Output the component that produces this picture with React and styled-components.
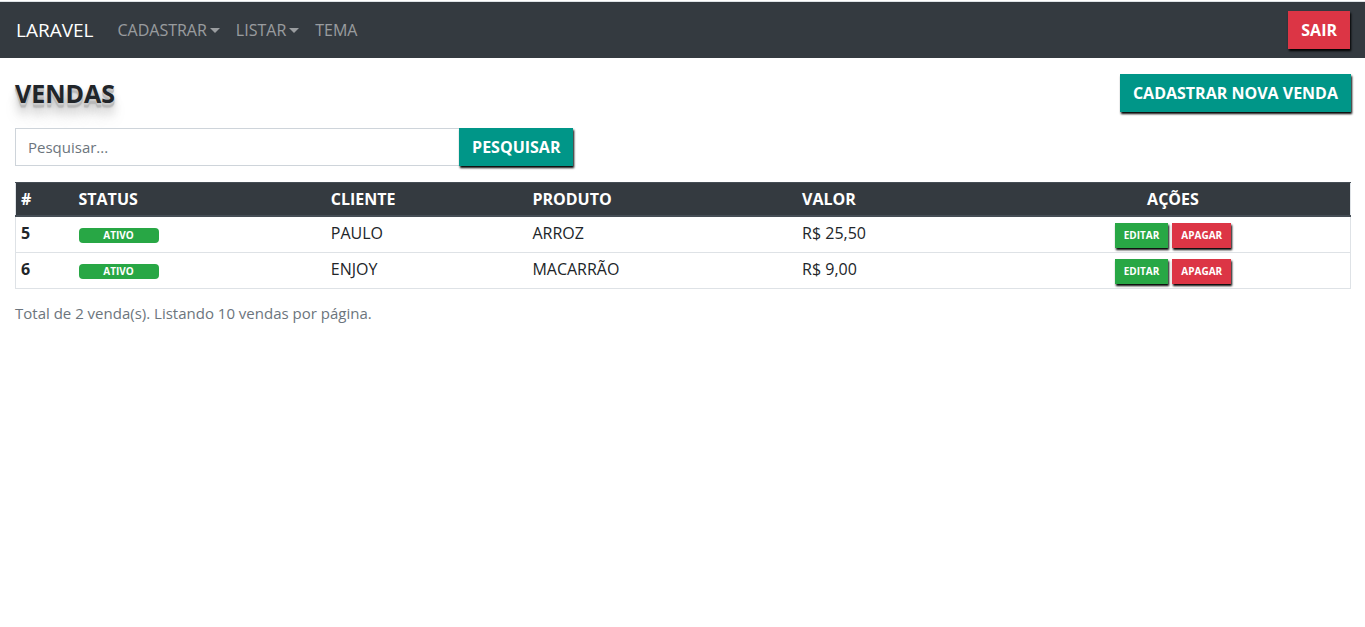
import React from "react";
import styled, { createGlobalStyle } from "styled-components";

const colors = {
  dark: "#343a40",
  darkLine: "#454d55",
  line: "#dee2e6",
  text: "#212529",
  muted: "#6c757d",
  teal: "#009688",
  green: "#28a745",
  red: "#dc3545",
};

const GlobalStyle = createGlobalStyle`
  *, *::before, *::after { box-sizing: border-box; }
  body {
    margin: 0;
    background: #fff;
    color: ${colors.text};
    font-family: "Segoe UI", "Open Sans", "Noto Sans", sans-serif;
    font-size: 16px;
    line-height: 24px;
  }
  button, input { font-family: inherit; }
`;

const Navbar = styled.nav`
  display: flex;
  align-items: center;
  margin-top: 1px;
  padding: 8px 15px 8px 16px;
  border-top: 1px solid ${colors.line};
  background: ${colors.dark};
`;

const Brand = styled.a`
  margin-right: 16px;
  color: #fff;
  font-size: 19px;
  line-height: 30px;
  text-decoration: none;
`;

const NavList = styled.ul`
  display: flex;
  flex: 1;
  margin: 0;
  padding: 0;
  list-style: none;
`;

const NavLink = styled.a`
  display: flex;
  align-items: center;
  gap: 3px;
  padding: 8px;
  color: rgba(255, 255, 255, 0.5);
  text-decoration: none;
`;

const Caret = styled.span`
  border: 5px solid transparent;
  border-top-color: currentColor;
  border-bottom: 0;
`;

const Button = styled.button`
  flex: none;
  height: 38px;
  padding: 0 13px;
  border: 0;
  background: ${(p) => colors[p.$tone]};
  color: #fff;
  font-size: 16px;
  font-weight: 700;
  line-height: 24px;
  box-shadow: 1px 2px 2px #000;
  cursor: pointer;
`;

const SmallButton = styled(Button)`
  height: 25px;
  padding: 0 9px;
  font-size: 10px;
  line-height: 16px;
`;

const Main = styled.main`
  padding: 16px 14px 16px 15px;
`;

const Heading = styled.header`
  display: flex;
  justify-content: space-between;
  align-items: center;
  margin-bottom: 16px;
`;

const Title = styled.h1`
  margin: 0;
  font-size: 25px;
  font-weight: 700;
  line-height: 32px;
  text-shadow: 0 1px 0 #ccc, 0 2px 0 #c9c9c9, 0 3px 0 #bbb,
    0 4px 0 #b9b9b9, 0 5px 1px rgba(0, 0, 0, 0.1),
    0 3px 5px rgba(0, 0, 0, 0.2), 0 10px 10px rgba(0, 0, 0, 0.2),
    0 16px 16px rgba(0, 0, 0, 0.1);
`;

const SearchForm = styled.form`
  display: flex;
  width: 41.8%;
  margin-bottom: 16px;
`;

const SearchInput = styled.input`
  flex: 1;
  min-width: 0;
  height: 38px;
  padding: 6px 12px;
  border: 1px solid #ced4da;
  border-right: 0;
  border-radius: 0;
  background: #fff;
  color: #495057;
  font-size: 15px;
  outline: 0;
  &::placeholder { color: ${colors.muted}; opacity: 1; }
`;

const Table = styled.table`
  width: 100%;
  margin-bottom: 12px;
  border: 1px solid ${colors.line};
  border-collapse: collapse;
  table-layout: fixed;
`;

const Col = styled.col`
  width: ${(p) => p.$width};
`;

const HeadCell = styled.th`
  height: 33px;
  padding: 0 5px;
  border-top: 1px solid ${colors.darkLine};
  border-bottom: 2px solid ${colors.darkLine};
  background: ${colors.dark};
  color: #fff;
  font-weight: 700;
  text-align: ${(p) => (p.$center ? "center" : "left")};
`;

const Cell = styled.td`
  height: 36px;
  padding: 4px 5px;
  border-top: 1px solid ${colors.line};
  font-weight: ${(p) => (p.$strong ? 700 : 400)};
  text-align: left;
  vertical-align: top;
`;

const Badge = styled.span`
  display: block;
  width: 80px;
  margin-top: 7px;
  border-radius: 4px;
  background: ${colors.green};
  color: #fff;
  font-size: 10px;
  font-weight: 700;
  line-height: 15px;
  text-align: center;
`;

const Actions = styled.div`
  display: flex;
  justify-content: center;
  gap: 4px;
  padding-top: 2px;
`;

const Summary = styled.p`
  margin: 0;
  color: ${colors.muted};
  font-size: 15px;
`;

const menu = [
  { label: "CADASTRAR", dropdown: true },
  { label: "LISTAR", dropdown: true },
  { label: "TEMA" },
];

const columns = [
  { label: "#", width: "58px" },
  { label: "STATUS", width: "18.9%" },
  { label: "CLIENTE", width: "15.1%" },
  { label: "PRODUTO", width: "20.2%" },
  { label: "VALOR", width: "14.9%" },
  { label: "AÇÕES", center: true },
];

const sales = [
  { id: 5, client: "PAULO", product: "ARROZ", value: "R$ 25,50" },
  { id: 6, client: "ENJOY", product: "MACARRÃO", value: "R$ 9,00" },
];

export default function App() {
  return (
    <>
      <GlobalStyle />
      <Navbar>
        <Brand href="#">LARAVEL</Brand>
        <NavList>
          {menu.map((item) => (
            <li key={item.label}>
              <NavLink href="#">
                {item.label}
                {item.dropdown && <Caret />}
              </NavLink>
            </li>
          ))}
        </NavList>
        <Button $tone="red" type="button">SAIR</Button>
      </Navbar>
      <Main>
        <Heading>
          <Title>VENDAS</Title>
          <Button $tone="teal" type="button">CADASTRAR NOVA VENDA</Button>
        </Heading>
        <SearchForm onSubmit={(e) => e.preventDefault()}>
          <SearchInput type="text" aria-label="Pesquisar" placeholder="Pesquisar..." />
          <Button $tone="teal" type="submit">PESQUISAR</Button>
        </SearchForm>
        <Table>
          <colgroup>
            {columns.map((c) => <Col key={c.label} $width={c.width} />)}
          </colgroup>
          <thead>
            <tr>
              {columns.map((c) => (
                <HeadCell key={c.label} scope="col" $center={c.center}>{c.label}</HeadCell>
              ))}
            </tr>
          </thead>
          <tbody>
            {sales.map((s) => (
              <tr key={s.id}>
                <Cell as="th" scope="row" $strong>{s.id}</Cell>
                <Cell><Badge>ATIVO</Badge></Cell>
                <Cell>{s.client}</Cell>
                <Cell>{s.product}</Cell>
                <Cell>{s.value}</Cell>
                <Cell>
                  <Actions>
                    <SmallButton $tone="green" type="button">EDITAR</SmallButton>
                    <SmallButton $tone="red" type="button">APAGAR</SmallButton>
                  </Actions>
                </Cell>
              </tr>
            ))}
          </tbody>
        </Table>
        <Summary>Total de 2 venda(s). Listando 10 vendas por página.</Summary>
      </Main>
    </>
  );
}
